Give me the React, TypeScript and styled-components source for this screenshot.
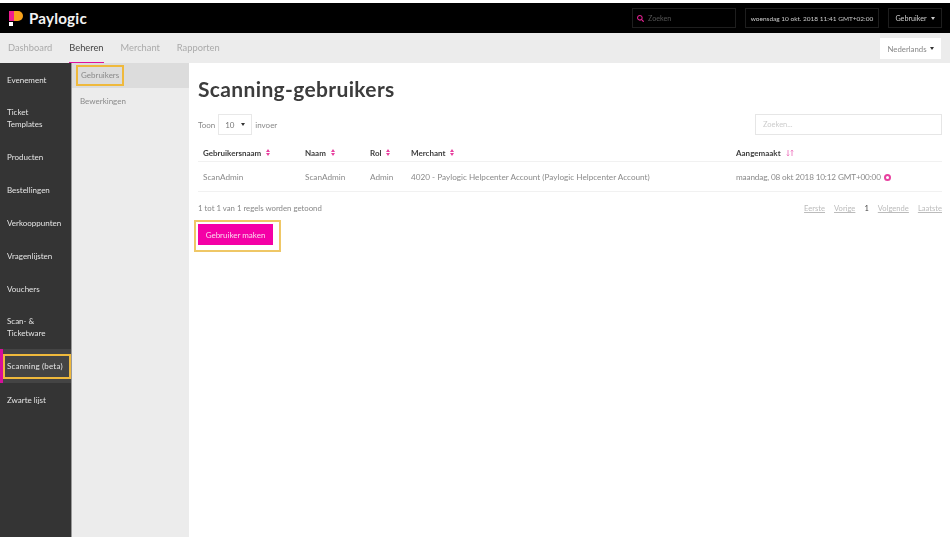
import React from "react"
import styled, { createGlobalStyle, css } from "styled-components"
import { FaSearch } from "react-icons/fa"

const GlobalStyle = createGlobalStyle`
  html, body { margin: 0; padding: 0; background: #fff; }
  body { font-family: Lato, "Open Sans", sans-serif; }
`

const Page = styled.div`
  width: 950px;
  height: 540px;
  overflow: hidden;
  display: flex;
  flex-direction: column;
  padding: 3px 0;
  box-sizing: border-box;
  color: #777;
  font-size: 8px;
  filter: blur(0.35px);
`

const Header = styled.header`
  height: 30px;
  flex: none;
  background: #000;
  display: flex;
  align-items: center;
  padding: 0 8px 0 8px;
`

const Brand = styled.div`
  display: flex;
  align-items: center;
  gap: 6px;
  color: #f2f2f2;
  font-size: 15.2px;
  font-weight: 700;
  letter-spacing: 0.2px;
  margin-right: auto;
`

const HeaderBox = styled.div<{ $width: number; $small?: boolean }>`
  width: ${(p) => p.$width}px;
  height: 20px;
  box-sizing: border-box;
  border: 1px solid #1e1e1e;
  display: flex;
  align-items: center;
  justify-content: center;
  gap: 4px;
  color: #ccc;
  font-size: ${(p) => (p.$small ? 6.5 : 7.2)}px;
  white-space: nowrap;
  margin-left: 9px;
`

const SearchBox = styled(HeaderBox)`
  justify-content: flex-start;
  padding-left: 4px;
  color: #555;
`

const Tabs = styled.nav`
  height: 30px;
  flex: none;
  background: #ececec;
  display: flex;
  align-items: center;
  padding: 0 9px 0 8px;
  gap: 17px;
`

const Tab = styled.span<{ $active?: boolean }>`
  font-size: 9.3px;
  line-height: 30px;
  height: 30px;
  box-sizing: border-box;
  color: #aaa;
  ${(p) =>
    p.$active &&
    css`
      color: #444;
      border-bottom: 1.5px solid #e0109a;
    `}
`

const LangSelect = styled.div`
  margin-left: auto;
  width: 61px;
  height: 21px;
  background: #fff;
  display: flex;
  align-items: center;
  justify-content: center;
  gap: 3px;
  font-size: 7.8px;
  color: #888;
  margin-top: 1px;
`

const Body = styled.div`
  flex: 1;
  display: flex;
  min-height: 0;
`

const Sidebar = styled.aside`
  width: 72px;
  flex: none;
  background: #343434;
  border-right: 1px solid #999;
  box-sizing: border-box;
`

const SideItem = styled.div<{ $tall?: boolean; $marked?: boolean }>`
  height: ${(p) => (p.$tall ? 44 : 33)}px;
  box-sizing: border-box;
  display: flex;
  align-items: center;
  padding-left: 7px;
  color: #e4e4e4;
  font-size: 8px;
  line-height: 12px;
  ${(p) =>
    p.$marked &&
    css`
      height: 34px;
      background: #444;
      padding-left: 3px;
      box-shadow: inset 3px 0 0 #d6109a;
    `}
`

const SideFrame = styled.span`
  width: 68px;
  height: 25px;
  box-sizing: border-box;
  border: 2.5px solid #efb93c;
  display: flex;
  align-items: center;
  padding-left: 2px;
  white-space: nowrap;
  letter-spacing: 0.16px;
`

const SubNav = styled.div`
  width: 117px;
  flex: none;
  background: #ececec;
`

const SubItem = styled.div<{ $active?: boolean }>`
  height: 25px;
  display: flex;
  align-items: center;
  padding-left: 8px;
  font-size: 8px;
  color: #8a8a8a;
  ${(p) => p.$active && "background: #dcdcdc;"}
`

const SubFrame = styled.span`
  margin-left: -4px;
  padding: 4px 3px;
  border: 2px solid #efb93c;
  line-height: 9px;
`

const Main = styled.main`
  flex: 1;
  min-width: 0;
  padding: 12px 8px 0 9px;
`

const Title = styled.h1`
  margin: 0 0 12px;
  font-size: 21px;
  line-height: 27px;
  font-weight: 700;
  color: #3c3c3c;
  letter-spacing: 0.35px;
`

const TableControls = styled.div`
  display: flex;
  align-items: center;
  justify-content: space-between;
  height: 21px;
  margin-bottom: 8px;
`

const LengthLabel = styled.div`
  display: flex;
  align-items: center;
  gap: 3px;
  font-size: 8px;
  color: #888;
`

const LengthSelect = styled.div`
  width: 34px;
  height: 21px;
  box-sizing: border-box;
  border: 1px solid #e8e8e8;
  display: flex;
  align-items: center;
  justify-content: center;
  gap: 7px;
  color: #777;
`

const Caret = styled.span<{ $light?: boolean }>`
  width: 0;
  height: 0;
  border-left: 2px solid transparent;
  border-right: 2px solid transparent;
  border-top: 3px solid ${(p) => (p.$light ? "#ccc" : "#333")};
`

const FilterInput = styled.div`
  width: 187px;
  height: 21px;
  box-sizing: border-box;
  border: 1px solid #e6e6e6;
  display: flex;
  align-items: center;
  padding-left: 7px;
  font-size: 7.5px;
  color: #ccc;
`

const Row = styled.div<{ $head?: boolean }>`
  display: grid;
  grid-template-columns: 102px 65px 41px 325px 1fr;
  align-items: center;
  box-sizing: content-box;
  padding-left: 5px;
  padding-top: ${(p) => (p.$head ? 1 : 0)}px;
  height: ${(p) => (p.$head ? 17 : 29)}px;
  border-bottom: 1px solid #f1f1f1;
  color: ${(p) => (p.$head ? "#3c3c3c" : "#8a8a8a")};
  font-size: ${(p) => (p.$head ? 8 : 8.2)}px;
  font-weight: ${(p) => (p.$head ? 700 : 400)};
`

const HeadCell = styled.span`
  display: flex;
  align-items: center;
  gap: 5px;
`

const DateCell = styled.span`
  letter-spacing: -0.15px;
`

const Clock = styled.span`
  display: inline-block;
  width: 3px;
  height: 3px;
  margin-left: 3px;
  border: 2px solid #e8409f;
  border-radius: 50%;
  vertical-align: -1px;
`

const Footer = styled.div`
  display: flex;
  justify-content: space-between;
  align-items: center;
  margin-top: 11px;
  font-size: 7.8px;
  color: #888;
`

const Pager = styled.div`
  display: flex;
  gap: 9px;
  font-size: 7.6px;
  color: #b5b5b5;
`

const PageLink = styled.span<{ $current?: boolean }>`
  text-decoration: ${(p) => (p.$current ? "none" : "underline")};
  color: ${(p) => (p.$current ? "#444" : "#bbb")};
`

const ButtonFrame = styled.div`
  display: inline-block;
  margin: 7px 0 0 -4px;
  padding: 2px 6px 5px 2px;
  border: 2.5px solid #efc766;
`

const CreateButton = styled.button`
  display: block;
  width: 75px;
  height: 21px;
  padding: 0;
  border: 0;
  background: #f400a6;
  color: #fbd6ee;
  font: inherit;
  font-size: 8px;
`

const Logo = () => (
  <svg width="15" height="16" viewBox="0 -1 15 16">
    <rect x="1" y="0" width="5" height="10" fill="#ef1b8f" />
    <path d="M6 0h4a5 5 0 0 1 0 10H6z" fill="#f7a21c" />
    <rect x="1" y="11" width="4" height="4" fill="#fff" />
  </svg>
)

const SortIcon = () => (
  <svg width="4" height="7" viewBox="0 0 4 7">
    <path d="M2 0l2 3H0zM2 7L0 4h4z" fill="#e8409f" />
  </svg>
)

const SortDescIcon = () => (
  <svg width="8" height="8" viewBox="0 0 8 8" fill="none" stroke="#f08ac8" strokeWidth="1">
    <path d="M2 1v6M.8 5.6 2 7l1.2-1.4M6 7V1M4.8 2.4 6 1l1.2 1.4" />
  </svg>
)

const sideItems = [
  { label: "Evenement" },
  { label: <>Ticket<br />Templates</>, tall: true },
  { label: "Producten" },
  { label: "Bestellingen" },
  { label: "Verkooppunten" },
  { label: "Vragenlijsten" },
  { label: "Vouchers" },
  { label: <>Scan- &amp;<br />Ticketware</>, tall: true },
  { label: "Scanning (beta)", marked: true },
  { label: "Zwarte lijst" },
]

const columns = ["Gebruikersnaam", "Naam", "Rol", "Merchant"]

export default function App() {
  return (
    <Page>
      <GlobalStyle />
      <Header>
        <Brand>
          <Logo />
          Paylogic
        </Brand>
        <SearchBox $width={104}>
          <FaSearch size={7} color="#e0208f" />
          Zoeken
        </SearchBox>
        <HeaderBox $width={134} $small>
          woensdag 10 okt. 2018 11:41 GMT+02:00
        </HeaderBox>
        <HeaderBox $width={54}>
          Gebruiker
          <Caret $light />
        </HeaderBox>
      </Header>
      <Tabs>
        <Tab>Dashboard</Tab>
        <Tab $active>Beheren</Tab>
        <Tab>Merchant</Tab>
        <Tab>Rapporten</Tab>
        <LangSelect>
          Nederlands <Caret />
        </LangSelect>
      </Tabs>
      <Body>
        <Sidebar>
          {sideItems.map((item, i) => (
            <SideItem key={i} $tall={item.tall} $marked={item.marked}>
              {item.marked ? <SideFrame>{item.label}</SideFrame> : <span>{item.label}</span>}
            </SideItem>
          ))}
        </Sidebar>
        <SubNav>
          <SubItem $active>
            <SubFrame>Gebruikers</SubFrame>
          </SubItem>
          <SubItem>Bewerkingen</SubItem>
        </SubNav>
        <Main>
          <Title>Scanning-gebruikers</Title>
          <TableControls>
            <LengthLabel>
              Toon
              <LengthSelect>
                10 <Caret />
              </LengthSelect>
              invoer
            </LengthLabel>
            <FilterInput>Zoeken...</FilterInput>
          </TableControls>
          <div>
            <Row $head>
              {columns.map((c) => (
                <HeadCell key={c}>
                  {c} <SortIcon />
                </HeadCell>
              ))}
              <HeadCell>
                Aangemaakt <SortDescIcon />
              </HeadCell>
            </Row>
            <Row>
              <span>ScanAdmin</span>
              <span>ScanAdmin</span>
              <span>Admin</span>
              <span>4020 - Paylogic Helpcenter Account (Paylogic Helpcenter Account)</span>
              <DateCell>
                maandag, 08 okt 2018 10:12 GMT+00:00
                <Clock />
              </DateCell>
            </Row>
          </div>
          <Footer>
            <span>1 tot 1 van 1 regels worden getoond</span>
            <Pager>
              <PageLink>Eerste</PageLink>
              <PageLink>Vorige</PageLink>
              <PageLink $current>1</PageLink>
              <PageLink>Volgende</PageLink>
              <PageLink>Laatste</PageLink>
            </Pager>
          </Footer>
          <ButtonFrame>
            <CreateButton>Gebruiker maken</CreateButton>
          </ButtonFrame>
        </Main>
      </Body>
    </Page>
  )
}
